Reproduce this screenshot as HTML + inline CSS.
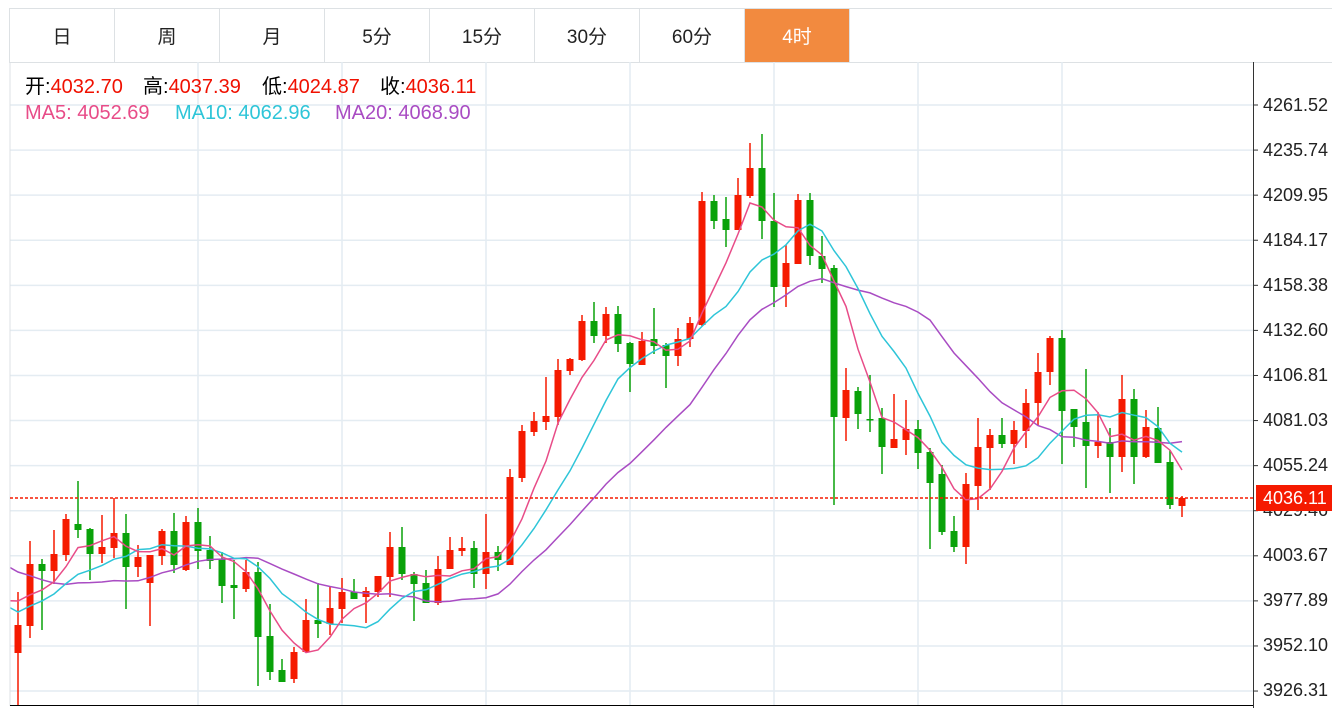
<!DOCTYPE html>
<html><head><meta charset="utf-8"><style>
*{margin:0;padding:0;box-sizing:border-box}
body{width:1332px;height:708px;background:#fff;overflow:hidden;font-family:"Liberation Sans","Noto Sans CJK SC",sans-serif;position:relative}
.tabs{position:absolute;left:9px;top:8px;height:55px;display:flex;border:1px solid #dde1e4;border-right:none}
.tab{width:105px;height:53px;border-right:1px solid #dde1e4;display:flex;align-items:center;justify-content:center;font-size:19px;color:#222}
.tab.on{background:#f28a3f;color:#fff}
.leg{position:absolute;font-size:20px;white-space:pre;line-height:24px}
.r{color:#f01000}
</style></head><body>
<div class="tabs"><div class="tab">日</div><div class="tab">周</div><div class="tab">月</div><div class="tab">5分</div><div class="tab">15分</div><div class="tab">30分</div><div class="tab">60分</div><div class="tab on">4时</div></div>
<div style="position:absolute;left:850px;top:8px;width:482px;height:55px;border-bottom:1px solid #dde1e4;border-top:1px solid #dde1e4"></div>
<svg id="c" width="1332" height="708" style="position:absolute;left:0;top:0">
<defs><clipPath id="cp"><rect x="10" y="62" width="1243" height="643"/></clipPath></defs>
<g id="grid"></g><g id="cand"></g><g id="ma" clip-path="url(#cp)"></g>
<line x1="10" y1="62" x2="10" y2="706" stroke="#dde1e4"/>
<line x1="10" y1="705.5" x2="1253" y2="705.5" stroke="#000"/>
<line x1="1253.5" y1="62" x2="1253.5" y2="708" stroke="#333"/>
<line x1="10" y1="498" x2="1253" y2="498" stroke="#f51a00" stroke-width="1.5" stroke-dasharray="3,2"/>
<g font-family="Liberation Sans, sans-serif" font-size="18" fill="#222">
<text x="1263" y="111">4261.52</text><text x="1263" y="156">4235.74</text><text x="1263" y="201">4209.95</text><text x="1263" y="246">4184.17</text><text x="1263" y="291">4158.38</text><text x="1263" y="336">4132.60</text><text x="1263" y="381">4106.81</text><text x="1263" y="426">4081.03</text><text x="1263" y="471">4055.24</text><text x="1263" y="516">4029.46</text><text x="1263" y="561">4003.67</text><text x="1263" y="606">3977.89</text><text x="1263" y="651">3952.10</text><text x="1263" y="696">3926.31</text>
</g>
<rect x="1256" y="485" width="76" height="26" fill="#f51a00"/>
<text x="1263" y="504" font-family="Liberation Sans, sans-serif" font-size="18" fill="#fff">4036.11</text>
</svg>
<div class="leg" style="top:75px;left:25px">开:<span class="r">4032.70</span></div>
<div class="leg" style="top:75px;left:143px">高:<span class="r">4037.39</span></div>
<div class="leg" style="top:75px;left:262px">低:<span class="r">4024.87</span></div>
<div class="leg" style="top:75px;left:380px">收:<span class="r">4036.11</span></div>
<div class="leg" style="top:101px;left:25px;color:#e84c88">MA5: 4052.69</div>
<div class="leg" style="top:101px;left:175px;color:#2ec5d8">MA10: 4062.96</div>
<div class="leg" style="top:101px;left:335px;color:#a94cc3">MA20: 4068.90</div>
<script>
var ns="http://www.w3.org/2000/svg";
function el(p,t,a){var e=document.createElementNS(ns,t);for(var k in a)e.setAttribute(k,a[k]);document.getElementById(p).appendChild(e);}
for(var k=0;k<14;k++){var y=105+45.08*k;el("grid","line",{x1:10,x2:1253,y1:y,y2:y,stroke:"#e4ecf2","stroke-width":1.5});el("grid","line",{x1:1253,x2:1258,y1:y,y2:y,stroke:"#333"});}
[198,342,486,630,774,918,1062].forEach(function(x){el("grid","line",{x1:x,x2:x,y1:62,y2:705,stroke:"#e4ecf2","stroke-width":1.5});});
var D=[
["r",625,653,592,705],["r",564,626,541,638],["g",564,571,559,630],["r",554,571,530,584],["r",519,555,514,561],
["g",524,530,481,538],["g",529,554,528,580],["r",547,554,515,563],["r",533,548,498,558],["g",533,567,514,609],
["r",557,567,545,577],["r",555,583,555,626],["r",531,556,529,565],["g",531,565,513,573],["r",522,570,516,571],
["g",522,551,508,569],["g",550,561,536,569],["g",559,586,552,603],["g",585,588,560,619],["r",572,589,560,592],
["g",572,637,562,686],["g",636,672,604,680],["g",670,682,659,682],["r",652,679,647,683],["r",620,652,599,652],
["g",620,624,583,638],["r",608,624,587,635],["r",592,609,578,623],["g",592,599,579,599],["r",591,597,587,623],
["r",576,592,576,597],["r",547,577,532,597],["g",547,574,527,580],["g",574,584,572,621],["g",583,603,570,603],
["r",569,603,556,605],["r",550,569,537,556],["r",548,551,537,556],["g",548,574,541,588],["r",552,574,514,589],
["g",552,560,546,571],["r",477,565,469,565],["r",431,478,425,482],["r",421,432,412,436],["r",416,422,377,430],
["r",370,417,359,425],["r",359,371,358,375],["r",321,360,315,361],["g",321,336,302,343],["r",314,336,307,343],
["g",314,344,306,352],["g",343,364,342,392],["r",341,365,332,365],["g",339,346,308,354],["g",345,356,343,388],
["r",339,356,328,366],["r",323,339,317,347],["r",201,325,192,326],["g",201,221,195,229],["g",219,230,197,247],
["r",195,230,178,230],["r",168,196,143,198],["g",168,221,134,239],["g",221,287,193,307],["r",263,287,245,307],
["r",200,264,194,264],["g",200,256,193,265],["g",256,269,236,283],["g",268,417,265,505],["r",390,418,368,441],
["g",391,414,387,429],["g",419,420,375,432],["g",418,447,408,474],["r",439,448,394,448],["r",429,440,400,455],
["g",429,453,420,469],["g",452,483,448,549],["g",474,532,465,535],["g",531,547,516,552],["r",484,547,473,564],
["r",447,486,418,510],["r",435,448,429,490],["g",435,444,418,448],["r",430,444,421,464],["r",403,431,389,448],
["r",372,403,353,425],["r",338,372,336,385],["g",338,411,330,464],["g",409,427,409,447],["g",422,446,369,488],
["r",442,446,412,458],["g",442,457,428,493],["r",399,457,375,472],["g",399,457,389,484],["r",427,457,410,458],
["g",428,463,407,463],["g",462,505,450,509],["r",498,506,496,517]];
var closes=[490,490,490,490,490,560,560,560,560,560,560,623,623,623,623,623,595,595,595,595];
D.forEach(function(d,i){var x=18+12*i,c=d[0]=="r"?"#f51a00":"#0aa20a";
el("cand","rect",{x:x-0.75,y:d[3],width:1.5,height:d[4]-d[3],fill:c});
el("cand","rect",{x:x-3.5,y:d[1],width:7,height:Math.max(1.5,d[2]-d[1]),fill:c});
closes.push(d[0]=="r"?d[1]:d[2]);});
function ma(n,col){var pts=[];for(var i=-1;i<D.length;i++){var j=i+20,s=0;for(var k=0;k<n;k++)s+=closes[j-k];pts.push((18+12*i)+","+(s/n).toFixed(1));}
el("ma","polyline",{points:pts.join(" "),fill:"none",stroke:col,"stroke-width":1.5});}
ma(20,"#a94cc3");ma(10,"#2ec5d8");ma(5,"#e84c88");
</script>
</body></html>
